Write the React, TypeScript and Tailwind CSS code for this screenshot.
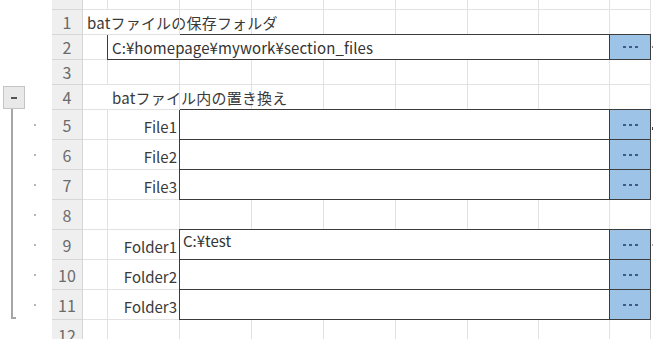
import type { ReactNode } from 'react';

const cols = [25, 72, 72, 72, 72, 72, 71, 71]; // B..I
const BTN_W = 41;

type RowDef = {
  num?: number;
  h: number;
  kind?: 'text' | 'wide' | 'box' | 'none';
  text?: string;
  label?: string;
  value?: string;
  mark?: 'arrow' | 'dark' | 'light';
  dot?: boolean;
};

const rows: RowDef[] = [
  { h: 10 },
  { num: 1, h: 25, kind: 'text', text: 'batファイルの保存フォルダ' },
  { num: 2, h: 25, kind: 'wide', value: 'C:¥homepage¥mywork¥section_files', mark: 'arrow' },
  { num: 3, h: 25 },
  { num: 4, h: 25, kind: 'text', text: 'batファイル内の置き換え' },
  { num: 5, h: 30, kind: 'box', label: 'File1', mark: 'dark', dot: true },
  { num: 6, h: 30, kind: 'box', label: 'File2', dot: true },
  { num: 7, h: 30, kind: 'box', label: 'File3', dot: true },
  { num: 8, h: 30, dot: true },
  { num: 9, h: 30, kind: 'box', label: 'Folder1', value: 'C:¥test', mark: 'light', dot: true },
  { num: 10, h: 30, kind: 'box', label: 'Folder2', dot: true },
  { num: 11, h: 30, kind: 'box', label: 'Folder3', dot: true },
  { num: 12, h: 30 },
];

function Cell({ w, children, className = '' }: { w: number; children?: ReactNode; className?: string }) {
  return (
    <div
      className={`shrink-0 h-full border-r border-b border-[#e2e2e2] overflow-visible ${className}`}
      style={{ width: w }}
    >
      {children}
    </div>
  );
}

function DotsButton({ h }: { h: number }) {
  return (
    <div
      className="shrink-0 -ml-px -mt-px flex items-center justify-center border border-[#3c3c3c] bg-[#9dc3e6] gap-[3px]"
      style={{ width: BTN_W + 1, height: h + 1 }}
    >
      <span className="w-[3px] h-[2px] bg-[#3d5a88]" />
      <span className="w-[3px] h-[2px] bg-[#3d5a88]" />
      <span className="w-[3px] h-[2px] bg-[#3d5a88]" />
    </div>
  );
}

function Mark({ type }: { type?: RowDef['mark'] }) {
  if (type === 'arrow')
    return <div className="mt-[8px] ml-[1px] w-0 h-0 border-y-[4px] border-y-transparent border-r-[3px] border-r-[#333]" />;
  if (type === 'dark') return <div className="mt-[17px] ml-[1px] w-[2px] h-[3px] bg-[#444]" />;
  if (type === 'light') return <div className="mt-[14px] ml-[1px] w-[2px] h-[2px] bg-[#aaa]" />;
  return null;
}

function SheetRow({ r }: { r: RowDef }) {
  const innerW = cols.slice(2).reduce((a, b) => a + b, 0);
  return (
    <div className="flex" style={{ height: r.h }}>
      {/* outline gutter */}
      <div className="w-[52px] shrink-0 h-full flex items-center">
        {r.dot && <span className="ml-[34px] w-[2px] h-[2px] bg-[#b5b5b5]" />}
      </div>
      {/* row header */}
      <div className="w-[31px] shrink-0 h-full bg-[#efefef] border-r border-b border-[#d6d6d6] flex items-center justify-center text-[16px] text-[#6b6b6b]">
        {r.num}
      </div>

      {r.kind === 'text' && (
        <>
          <Cell w={cols[0]} className="border-r-0 relative">
            <span className="absolute left-[4px] top-0 h-full flex items-center whitespace-nowrap text-[#3a3a3a] tracking-[0.2px]">
              {r.num === 1 ? r.text : ''}
            </span>
          </Cell>
          <Cell w={cols[1]} className="relative">
            <span className="absolute left-[4px] top-0 h-full flex items-center whitespace-nowrap text-[#3a3a3a] tracking-[0.2px]">
              {r.num === 4 ? r.text : ''}
            </span>
          </Cell>
          {cols.slice(2).map((w, i) => (
            <Cell key={i} w={w} />
          ))}
          <Cell w={BTN_W} />
        </>
      )}

      {r.kind === 'wide' && (
        <>
          <Cell w={cols[0]} />
          <div
            className="shrink-0 -ml-px -mt-px border border-[#3c3c3c] bg-white flex items-center pl-[4px] text-[#333] whitespace-nowrap tracking-[0.1px]"
            style={{ width: cols[1] + innerW + 1, height: r.h + 1 }}
          >
            {r.value}
          </div>
          <DotsButton h={r.h} />
        </>
      )}

      {r.kind === 'box' && (
        <>
          <Cell w={cols[0]} />
          <Cell w={cols[1]} className="flex items-center justify-end pr-[2px] pt-[3px] text-[#3a3a3a]">
            {r.label}
          </Cell>
          <div
            className="shrink-0 -ml-px -mt-px border border-[#3c3c3c] bg-white pl-[3px] pt-[3px] text-[#333] whitespace-nowrap"
            style={{ width: innerW + 1, height: r.h + 1 }}
          >
            {r.value}
          </div>
          <DotsButton h={r.h} />
        </>
      )}

      {(r.kind === undefined || r.kind === 'none') && (
        <>
          {cols.map((w, i) => (
            <Cell key={i} w={w} />
          ))}
          <Cell w={BTN_W} />
        </>
      )}

      <div className="w-[2px] shrink-0 overflow-visible">
        <Mark type={r.mark} />
      </div>
    </div>
  );
}

export default function App() {
  return (
    <div className="relative w-[653px] h-[339px] overflow-hidden bg-white font-['Noto_Sans_CJK_JP','Noto_Sans',sans-serif] text-[15px] leading-none">
      {rows.map((r, i) => (
        <SheetRow key={i} r={r} />
      ))}

      {/* outline group control */}
      <div className="absolute left-[3px] top-[86px] w-[22px] h-[23px] bg-[#e9e9e9] border border-[#c4c4c4] flex items-center justify-center">
        <span className="w-[6px] h-[2px] bg-[#555]" />
      </div>
      <div className="absolute left-[11px] top-[109px] w-[2px] h-[210px] bg-[#a6a6a6]" />
      <div className="absolute left-[11px] top-[317px] w-[5px] h-[2px] bg-[#a6a6a6]" />
    </div>
  );
}
